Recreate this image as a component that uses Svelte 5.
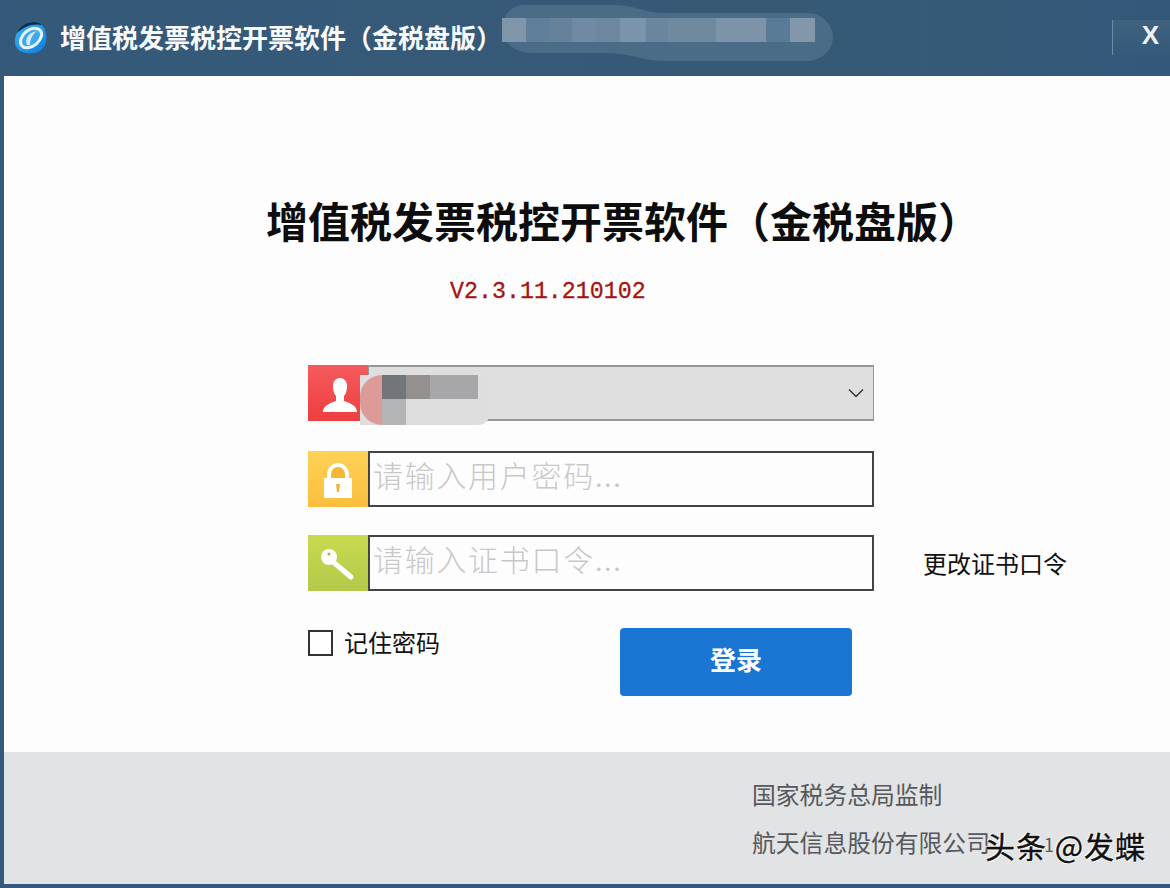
<script lang="ts">
  // Pixelated redaction blocks laid over the title bar and the account select.
  const titleCells = [
    [24, "#7f95a8"], [23, "#5f7f9a"], [23, "#66829a"], [24, "#6f8aa2"], [24, "#6d879e"], [26, "#7a95ab"],
    [22, "#6a869e"], [48, "#6f899f"], [50, "#7d93a8"], [24, "#5a7b97"], [25, "#8497aa"]
  ] as const;
  const title = "增值税发票税控开票软件（金税盘版）";
</script>

<div class="window">
  <header class="titlebar">
    <svg class="logo" viewBox="0 0 34 34" width="34" height="34">
      <defs>
        <linearGradient id="lg" x1="0" y1="0" x2="1" y2="1">
          <stop offset="0" stop-color="#39b4f2" />
          <stop offset="1" stop-color="#0f7fdc" />
        </linearGradient>
      </defs>
      <path d="M1 22C0 12 8 1 20 1c5 0 9 3 11 8 2 6 2 13-2 18-4 5-11 6-17 5C6 31 2 28 1 22z" fill="url(#lg)" />
      <path d="M3 12C6 5 12 1 20 1c3 0 6 1 8 3C20 2 10 5 3 12z" fill="#0c2c4e" />
      <ellipse cx="17" cy="17" rx="12" ry="8" transform="rotate(-40 17 17)" fill="#3fa7ea" stroke="#eaf5fb" stroke-width="3" />
      <path d="M13 24c-3-6 2-13 10-14-4 3-7 8-7 14z" fill="#cfe9f8" />
    </svg>
    <h2 class="app-name">{title}</h2>

    <div class="smudge">
      <svg viewBox="0 0 332 57" width="332" height="57">
        <path d="M22 0H110C135 0 140 8 165 8H305C322 8 331 22 331 32C331 46 318 56 305 56H165C140 56 130 48 100 48H30C12 48 0 36 0 25C0 10 10 0 22 0Z" fill="#7a97ae" fill-opacity=".3" />
      </svg>
      <div class="smudge-cells">
        {#each titleCells as [w, c]}
          <span style="width:{w}px;background:{c}"></span>
        {/each}
      </div>
    </div>

    <button class="close" type="button">X</button>
  </header>

  <div class="body">
    <main class="main">
      <h1 class="heading">{title}</h1>
      <div class="version">V2.3.11.210102</div>

      <div class="form">
        <div class="row">
          <span class="tile red">
            <svg viewBox="0 0 60 56" width="60" height="56">
              <path d="M15 47c0-7 8-9 13-11v-5c-2-2-3-6-3-10 0-5 3-8 7-8s7 3 7 8c0 4-1 8-3 10v5c5 2 13 4 13 11z" fill="#fff" />
            </svg>
          </span>
          <div class="select">
            <svg class="chevron" viewBox="0 0 16 10" width="16" height="10">
              <path d="M1 1.5l7 7 7-7" fill="none" stroke="#333" stroke-width="1.4" />
            </svg>
            <div class="blur">
              <span class="blur-edge"></span>
              <span class="px a"></span><span class="px b"></span><span class="px c"></span>
              <span class="px d"></span>
            </div>
          </div>
        </div>

        <div class="row second">
          <span class="tile yellow">
            <svg viewBox="0 0 60 56" width="60" height="56">
              <path d="M19 28v-4c0-7 5-12 11-12s11 5 11 12v4z" fill="#fff" />
              <path d="M23 28v-4c0-5 3-8 7-8s7 3 7 8v4z" fill="#f7b733" />
              <rect x="16" y="27" width="28" height="20" rx="1" fill="#fff" />
              <path d="M28 33h4l-1 8h-2z" fill="#f3b23a" />
            </svg>
          </span>
          <input class="field" placeholder="请输入用户密码..." />
        </div>

        <div class="row third">
          <span class="tile green">
            <svg viewBox="0 0 60 56" width="60" height="56">
              <circle cx="21" cy="22" r="8" fill="#fff" />
              <path d="M24 26l19 16" stroke="#fff" stroke-width="5" stroke-linecap="round" />
              <circle cx="21" cy="19" r="1.6" fill="#a9b84a" />
            </svg>
          </span>
          <input class="field" placeholder="请输入证书口令..." />
          <a class="change" href="#top">更改证书口令</a>
        </div>

        <div class="actions">
          <label class="remember">
            <input type="checkbox" />
            <span>记住密码</span>
          </label>
          <button class="login" type="button">登录</button>
        </div>
      </div>
    </main>

    <footer class="footer">
      <p>国家税务总局监制</p>
      <p>航天信息股份有限公司<span class="tail">1</span></p>
      <span class="watermark">头条 @发蝶</span>
    </footer>
  </div>
</div>

<style>
  :global(body) {
    margin: 0;
    background: #35597a;
  }

  .window {
    display: flex;
    flex-direction: column;
    width: 1170px;
    height: 888px;
    overflow: hidden;
    background: #35597a;
    font-family: "Noto Sans CJK SC", "Liberation Sans", sans-serif;
  }

  .titlebar {
    position: relative;
    display: flex;
    align-items: center;
    flex: none;
    height: 76px;
    padding-left: 14px;
    box-sizing: border-box;
    background: linear-gradient(90deg, #35597a, #365a75 70%, #34587a);
  }

  .logo {
    flex: none;
  }

  .app-name {
    margin: -2px 0 0 12px;
    font-size: 26px;
    font-weight: 700;
    line-height: 1;
    color: #f8fafc;
    white-space: nowrap;
  }

  .smudge {
    position: absolute;
    left: 502px;
    top: 5px;
    width: 332px;
    height: 57px;
  }

  .smudge svg {
    display: block;
  }

  .smudge-cells {
    position: absolute;
    left: 0;
    top: 13px;
    display: flex;
    height: 24px;
  }

  .smudge-cells span {
    display: block;
  }

  .close {
    position: absolute;
    right: 0;
    top: 20px;
    width: 58px;
    height: 35px;
    padding: 0 11px 5px 0;
    border: 0;
    border-left: 1px solid #6f8ba3;
    background: linear-gradient(180deg, #3f627f, #35597a);
    color: #f0f0f0;
    font: 700 26px/30px "Liberation Sans", sans-serif;
    text-align: right;
  }

  .body {
    display: flex;
    flex-direction: column;
    flex: 1;
    margin: 0 0 4px 4px;
    background: #fefdfe;
  }

  .main {
    flex: 1;
    padding-top: 119px;
  }

  .heading {
    margin: 0 0 0 262px;
    font-size: 42px;
    font-weight: 700;
    line-height: 50px;
    color: #0d0d0d;
    white-space: nowrap;
  }

  .version {
    margin: 32px 0 0 446px;
    font-family: "Liberation Mono", monospace;
    font-size: 23.3px;
    line-height: 30px;
    color: #a5140f;
    -webkit-text-stroke: 0.3px #a5140f;
  }

  .form {
    margin: 58px 0 0 304px;
  }

  .row {
    position: relative;
    display: flex;
    height: 56px;
  }

  .row.second {
    margin-top: 30px;
  }

  .row.third {
    margin-top: 28px;
  }

  .tile {
    display: block;
    flex: none;
    width: 60px;
    height: 56px;
  }

  .tile svg {
    display: block;
  }

  .tile.red {
    background: linear-gradient(180deg, #f55b5d, #ee3e40);
  }

  .tile.yellow {
    background: linear-gradient(180deg, #fdd256, #fbbe3d);
  }

  .tile.green {
    background: linear-gradient(180deg, #c9da50, #b4c94a);
  }

  .select {
    position: relative;
    display: flex;
    align-items: center;
    justify-content: flex-end;
    flex: none;
    width: 506px;
    box-sizing: border-box;
    padding-right: 9px;
    border: 1px solid #979797;
    border-top-width: 2px;
    border-bottom-width: 2px;
    background: #e0dfe0;
  }

  .blur {
    position: absolute;
    left: -9px;
    top: 8px;
    display: grid;
    grid-template-columns: 22px 24px 24px 48px;
    grid-template-rows: 24px 26px;
    width: 130px;
    height: 50px;
    background: #dedede;
    border-radius: 0 12px 12px 0;
  }

  .blur-edge {
    grid-row: 1 / 3;
    border-radius: 25px 0 0 25px;
    background: #dc9a98;
  }

  .px.a {
    background: #72757a;
  }

  .px.b {
    background: #94908f;
  }

  .px.c {
    background: #a7a7a9;
  }

  .px.d {
    grid-column: 2;
    grid-row: 2;
    background: #b3b4b6;
  }

  .field {
    flex: none;
    width: 506px;
    height: 56px;
    box-sizing: border-box;
    padding: 0 0 5px 3px;
    border: 2px solid #444;
    border-radius: 0;
    background: #fefdfe;
    font-family: "Liberation Serif", "Noto Sans CJK SC", sans-serif;
    font-size: 30px;
    font-weight: 300;
    letter-spacing: 1.7px;
    outline: none;
  }

  .field::placeholder {
    color: #c8c8c8;
    opacity: 1;
  }

  .change {
    align-self: center;
    margin: 0 0 0 49px;
    font-size: 24px;
    line-height: 30px;
    color: #111;
    text-decoration: none;
    white-space: nowrap;
  }

  .actions {
    display: flex;
    align-items: flex-start;
    margin-top: 37px;
  }

  .remember {
    display: flex;
    align-items: center;
    width: 312px;
    height: 30px;
    font-size: 24px;
    color: #111;
  }

  .remember span {
    margin-top: -4px;
  }

  .remember input {
    appearance: none;
    flex: none;
    width: 25px;
    height: 26px;
    margin: 0 11px 0 0;
    box-sizing: border-box;
    border: 2px solid #333;
    background: #fff;
  }

  .login {
    width: 232px;
    height: 68px;
    padding: 0 0 8px;
    border: 0;
    border-radius: 4px;
    background: #1a76d2;
    color: #fff;
    font-family: "Noto Sans CJK SC", sans-serif;
    font-size: 26px;
    font-weight: 700;
  }

  .footer {
    position: relative;
    flex: none;
    height: 132px;
    box-sizing: border-box;
    padding: 25px 0 0 748px;
    background: #e2e3e5;
    color: #55585c;
    font-size: 23.8px;
  }

  .footer p {
    margin: 0 0 14px;
    line-height: 34px;
  }

  .tail {
    margin-left: 54px;
    font-size: 18px;
  }

  .watermark {
    position: absolute;
    left: 981px;
    top: 73px;
    font-size: 30px;
    letter-spacing: 1px;
    line-height: 40px;
    color: #111;
    white-space: nowrap;
    -webkit-text-stroke: 0.4px #111;
    text-shadow: 0 0 2px #fff, 1px 1px 1px #fff, -1px -1px 1px #fff;
  }
</style>
